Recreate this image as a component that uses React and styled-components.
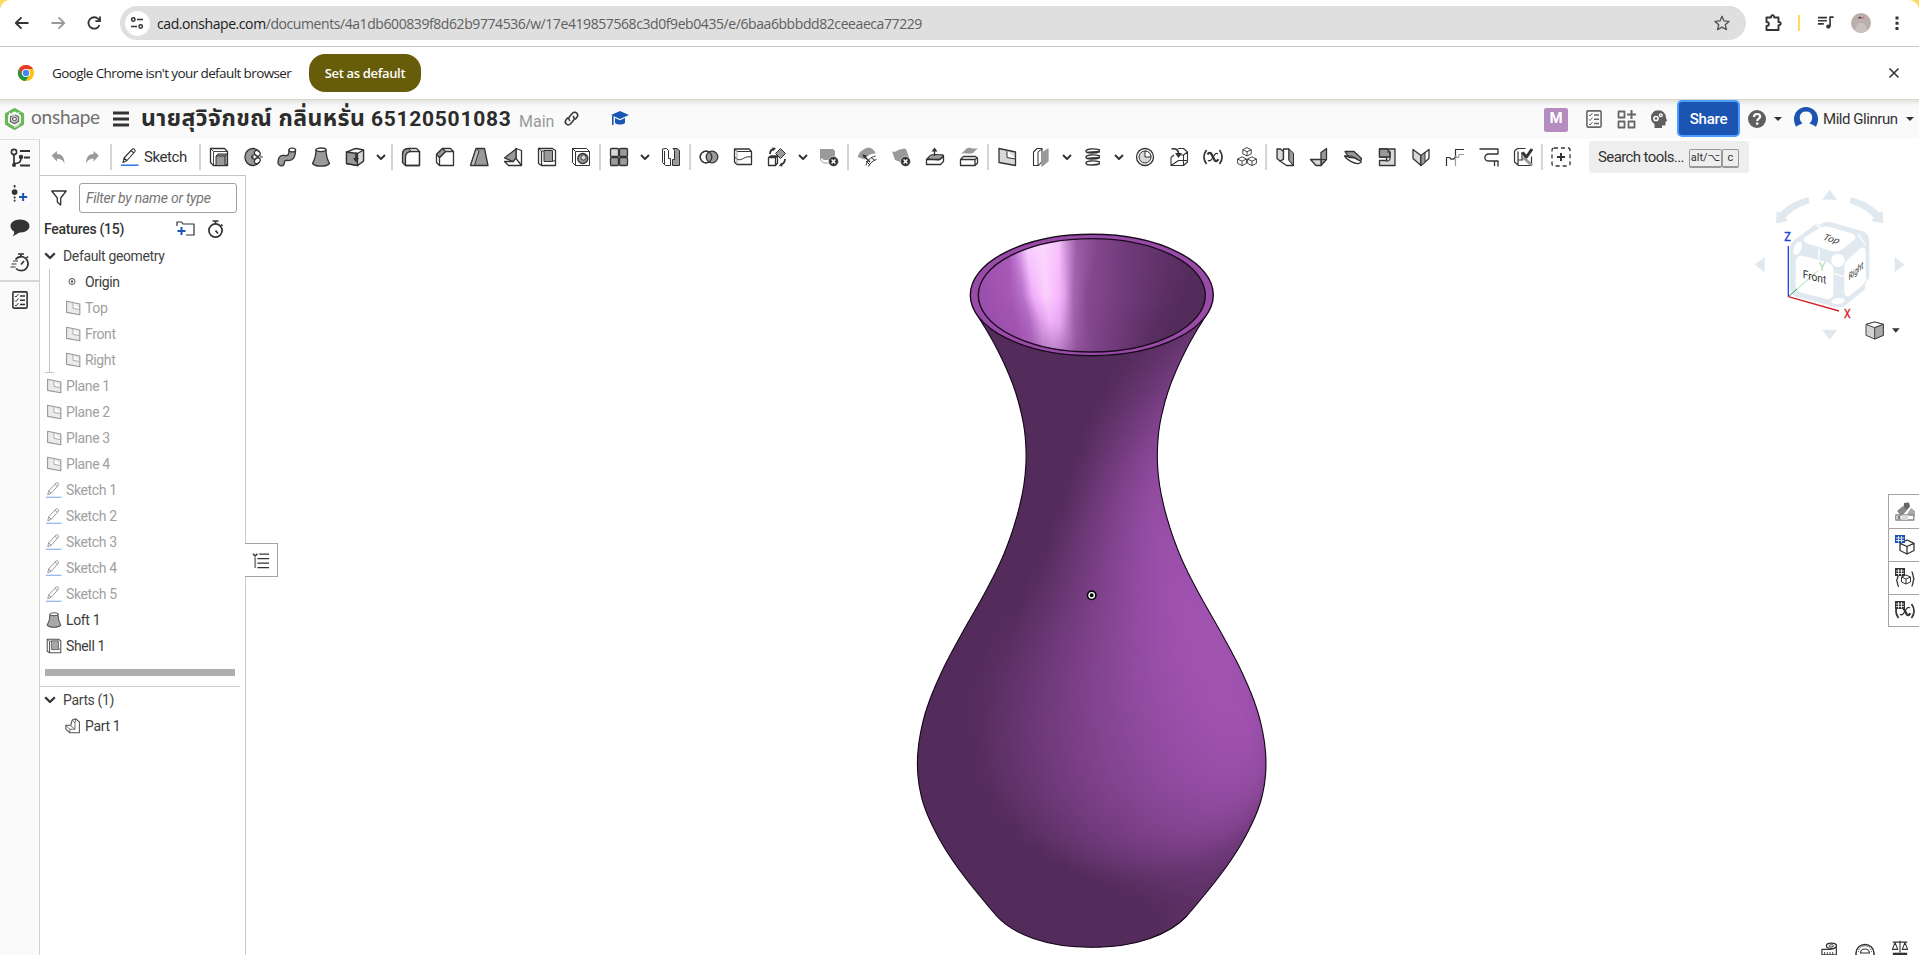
import React from 'react';
import styled, { createGlobalStyle } from 'styled-components';

const Global = createGlobalStyle`
  *, *::before, *::after { box-sizing: border-box; }
  html, body { margin: 0; padding: 0; overflow: hidden; background: #fff; }
  body { font-family: Roboto, "Liberation Sans", sans-serif; color: #333; }
  button, input { font: inherit; color: inherit; margin: 0; }
`;

const Page = styled.div`
  display: flex;
  flex-direction: column;
  width: 100vw;
  height: 100vh;
  background: #fff;
`;

/* ---------- browser chrome ---------- */
const TabStrip = styled.div`
  background: #ffd95c;
`;
const BrowserBar = styled.div`
  display: flex;
  align-items: center;
  height: 47px;
  background: #fff;
  border-radius: 10px 10px 0 0;
  border-bottom: 1px solid #c9c9c9;
  padding-left: 12px;
`;
const NavButtons = styled.div`
  display: flex;
  gap: 16px;
  width: 108px;
`;
const Omnibox = styled.div`
  display: flex;
  align-items: center;
  width: 1626px;
  height: 34px;
  border-radius: 17px;
  background: #dfdfdf;
  padding: 0 15px 0 4.5px;
`;
const SiteInfo = styled.div`
  display: grid;
  place-items: center;
  width: 25px;
  height: 25px;
  border-radius: 50%;
  background: #fff;
  margin-right: 7.5px;
`;
const Url = styled.div`
  flex: 1;
  font: 14px "Open Sans", "Noto Sans", sans-serif;
  letter-spacing: -0.42px;
  color: #606060;
  white-space: nowrap;
  b { font-weight: 400; color: #202020; }
`;
const BrowserActions = styled.div`
  display: flex;
  align-items: center;
  padding-left: 17px;
`;
const YellowBar = styled.span`
  width: 2px;
  height: 16px;
  background: #ffd95c;
  margin: 0 17px 0 15px;
`;
const Profile = styled.span`
  width: 20px;
  height: 20px;
  border-radius: 50%;
  overflow: hidden;
  margin: 0 16px 0 16px;
  svg { display: block; }
`;
const InfoBar = styled.div`
  display: flex;
  align-items: center;
  height: 53px;
  padding: 0 16px 0 17px;
  border-bottom: 1px solid #d7d9c9;
  font: 14px "Open Sans", "Noto Sans", sans-serif;
  color: #1f1f1f;
`;
const InfoText = styled.span`
  width: 257px;
  margin-left: 17px;
  font-size: 13.5px;
  letter-spacing: -0.6px;
  white-space: nowrap;
`;
const DefaultButton = styled.button`
  width: 112px;
  height: 38px;
  border: 0;
  border-radius: 16px;
  background: #675c0a;
  color: #fff;
  font-weight: 600;
  font-size: 13px;
  letter-spacing: -0.35px;
  padding: 0;
  white-space: nowrap;
`;
const CloseSlot = styled.span`
  margin-left: auto;
  display: flex;
`;

/* ---------- document header ---------- */
const Header = styled.header`
  display: flex;
  align-items: center;
  height: 39px;
  background: linear-gradient(#e2e2e2, #f6f6f6 5px, #fafafa 9px);
  padding: 0 5px 2px 4px;
`;
const Brand = styled.span`
  width: 82px;
  margin: -4px 0 0 6px;
  font: 19px Lato, sans-serif;
  letter-spacing: -0.2px;
  color: #707070;
`;
const Title = styled.h1`
  display: flex;
  align-items: baseline;
  margin: 0 0 0 12px;
  padding-top: 1px;
  font: 700 20px/30px Roboto, "Noto Sans Thai", sans-serif;
  white-space: nowrap;
  color: #2c2c2c;
`;
const ThaiName = styled.span`
  width: 230px;
  font-size: 23px;
  letter-spacing: 0.45px;
`;
const Digits = styled.span`
  width: 148px;
  font-size: 21px;
  letter-spacing: 0.72px;
`;
const Branch = styled.span`
  width: 45px;
  font-size: 16px;
  padding-top: 5px;
  color: #999;
`;
const CapSlot = styled.span`
  display: flex;
  margin-left: 32px;
`;
const HeaderRight = styled.div`
  display: flex;
  align-items: center;
  margin-left: auto;
  height: 37px;
`;
const Badge = styled.span`
  width: 24px;
  height: 24px;
  border-radius: 2px;
  background: #b58cc0;
  color: #fff;
  font: 700 15px/21px Roboto, sans-serif;
  text-align: center;
  margin: 3px 18px 0 0;
`;
const HeadIcon = styled.span`
  display: flex;
  margin: 1px ${(p) => p.$gap}px 0 0;
`;
const ShareButton = styled.button`
  width: 63px;
  height: 37px;
  border: 2px solid #4a9cff;
  border-radius: 5px;
  background: #1b55b1;
  color: #fff;
  font-weight: 500;
  font-size: 15px;
  letter-spacing: -0.2px;
  padding: 0;
  margin-right: 8px;
`;
const UserName = styled.span`
  width: 83px;
  font-size: 15px;
  letter-spacing: -0.45px;
  white-space: nowrap;
`;

/* ---------- app frame ---------- */
const Frame = styled.div`
  display: flex;
  flex: 1;
  min-height: 0;
`;
const Rail = styled.nav`
  display: flex;
  flex-direction: column;
  width: 40px;
  background: #fafafa;
  border-right: 1px solid #d0d0d0;
  border-top: 1px solid #e0e0e0;
`;
const RailItem = styled.span`
  display: grid;
  place-items: center;
  height: 35px;
`;
const RailSplit = styled.hr`
  width: 100%;
  height: 2px;
  border: 0;
  margin: 0;
  background: #d6d6d6;
`;
const Work = styled.div`
  display: flex;
  flex-direction: column;
  flex: 1;
  min-width: 0;
`;
const ToolBar = styled.div`
  display: flex;
  align-items: center;
  height: 36px;
`;
const Tool = styled.span`
  display: grid;
  place-items: center;
  width: ${(p) => p.$w || 34}px;
  height: 36px;
`;
const Separator = styled.span`
  width: 2px;
  height: 26px;
  margin: 0 1px;
  background: #d4d4d4;
`;
const SketchButton = styled.span`
  display: flex;
  align-items: center;
  width: 85px;
  padding-left: 8px;
  gap: 5px;
  font-size: 15px;
  letter-spacing: -0.4px;
`;
const SearchTools = styled.span`
  display: flex;
  align-items: center;
  width: 160px;
  height: 32px;
  margin-left: 11px;
  padding-left: 9px;
  border-radius: 3px;
  background: #eee;
  font-size: 15px;
  letter-spacing: -0.6px;
`;
const SearchLabel = styled.span`
  width: 91px;
`;
const Key = styled.kbd`
  width: ${(p) => p.$w}px;
  height: 19px;
  margin-top: 3px;
  border: 1px solid #999;
  border-bottom-width: 2px;
  border-radius: 2px;
  font: 11px/16px Roboto, "DejaVu Sans", sans-serif;
  letter-spacing: 0;
  text-align: center;
  white-space: nowrap;
`;
const Body = styled.div`
  display: flex;
  flex: 1;
  min-height: 0;
`;

/* ---------- feature panel ---------- */
const Panel = styled.aside`
  width: 206px;
  border-top: 1px solid #c4c4c4;
  border-right: 1px solid #c9c9c9;
  font-size: 14px;
  letter-spacing: -0.36px;
`;
const FilterRow = styled.div`
  display: flex;
  align-items: center;
  padding: 7px 0 0 11px;
  height: 37px;
  gap: 12px;
`;
const FilterInput = styled.input`
  width: 158px;
  height: 30px;
  border: 1px solid #a0a0a0;
  border-radius: 3px;
  padding: 0 6px;
  font-style: italic;
  letter-spacing: -0.25px;
  outline: 0;
  &::placeholder { color: #757575; opacity: 1; }
`;
const FeatureHead = styled.div`
  display: flex;
  align-items: center;
  height: 30px;
  padding: 1px 0 0 4px;
  font-weight: 500;
  letter-spacing: -0.28px;
`;
const HeadLabel = styled.span`
  width: 132px;
`;
const FolderSlot = styled.span`
  display: flex;
  width: 31px;
`;
const Group = styled.div`
  display: flex;
  align-items: center;
  height: 26px;
  padding-left: 4px;
  gap: 7px;
  color: #444;
`;
const Nested = styled.div`
  position: relative;
  &::before {
    content: '';
    position: absolute;
    left: 9px; top: 0; width: 1px; height: 103px;
    background: #c4c4c4;
  }
  &::after {
    content: '';
    position: absolute;
    left: 5px; top: 103px; width: 9px; height: 1px;
    background: #c4c4c4;
  }
`;
const Row = styled.div`
  display: flex;
  align-items: center;
  height: 26px;
  gap: 4px;
  padding-left: ${(p) => (p.$nested ? 25 : 6)}px;
  color: ${(p) => (p.$dim ? '#a0a0a0' : '#3c3c3c')};
  svg { opacity: ${(p) => (p.$dim ? 0.5 : 0.85)}; }
`;
const Rollback = styled.div`
  width: 190px;
  height: 7px;
  margin: 10px 0 10px 5px;
  background: #aeaeae;
`;
const PartsBlock = styled.div`
  width: 200px;
  border-top: 1px solid #cfcfcf;
`;

/* ---------- canvas ---------- */
const Canvas = styled.main`
  position: relative;
  flex: 1;
  min-width: 0;
`;
const VaseSlot = styled.div`
  position: absolute;
  left: 658px;
  top: 50px;
  svg { display: block; }
`;
const ListToggle = styled.div`
  position: absolute;
  left: -1px;
  top: 368px;
  display: grid;
  place-items: center;
  width: 33px;
  height: 34px;
  background: #fff;
  border: 1px solid #a4a4a4;
  border-left: 0;
`;
const CubeSlot = styled.div`
  position: absolute;
  right: 12px;
  top: 13px;
  svg { display: block; }
`;
const SideTabs = styled.div`
  position: absolute;
  right: 0;
  top: 319px;
  width: 31px;
  border: 1px solid #a4a4a4;
  border-right: 0;
  background: #fff;
`;
const SideTab = styled.div`
  display: grid;
  place-items: center;
  height: 33px;
  padding-left: 1px;
  & + & { border-top: 1px solid #a4a4a4; }
  &:last-child { height: 32px; }
`;
const BottomTools = styled.div`
  position: absolute;
  right: 10px;
  bottom: -4px;
  display: flex;
  gap: 16px;
`;

/* ---------- icons ---------- */
const D = '#333';
const G = '#9a9a9a';
const L = '#d8d8d8';

const Svg = ({ w = 20, h = w, vb = '0 0 20 20', children, sw = 1.3 }) => (
  <svg width={w} height={h} viewBox={vb} fill="none" stroke={D} strokeWidth={sw} strokeLinejoin="round" overflow="visible">
    {children}
  </svg>
);

const Delete = () => (
  <>
    <circle cx="14.5" cy="14.5" r="5" fill={D} stroke="#fff" strokeWidth="0.6" />
    <path d="M12.6 12.6l3.8 3.8M16.4 12.6l-3.8 3.8" stroke="#fff" strokeWidth="1.4" />
  </>
);
const cube = (x, y, s) => (
  <path key={`${x}-${y}`} strokeWidth="0.9" d={`M${x} ${y - s}l${s} ${s / 2}v${s}l${-s} ${s / 2}l${-s} ${-s / 2}v${-s}zM${x - s} ${y - s / 2}l${s} ${s / 2}l${s} ${-s / 2}M${x} ${y}v${s}`} />
);

const glyphs = {
  undo: <path d="M2 7.500l6-5v3.300c5.500 0 8.500 3.500 8.500 11c-1.500-4-4-5.600-8.500-5.600v3.300z" transform="translate(1 1) scale(.98)" fill={G} stroke="none" />,
  redo: <path d="M18 7.500l-6-5v3.300c-5.500 0-8.500 3.500-8.500 11c1.500-4 4-5.600 8.500-5.600v3.300z" transform="translate(0 1) scale(.98)" fill={G} stroke="none" />,
  extrude: <><path d="M1.500 1.500h14l3 3v14h-14l-3-3z" fill="#fff" /><path d="M1.500 1.500l3 3h14M4.500 4.500v14" strokeWidth="0.9" /><path d="M7 9l2-2h9.500v9.500l-2 2h-9.500z" fill={G} strokeWidth="1" /><path d="M7 9h9v9.500M16 9l2.500-2" strokeWidth="1" /></>,
  revolve: <><path d="M16 4.500a8 8.500 0 1 0 0 11l-3.400-3.600a3.300 3.300 0 0 1-4-2a3.300 3.300 0 0 1 4-2z" fill={G} /><path d="M16 4.500a2.600 2 40 0 1-3.400 3.600a2.600 2 40 0 1 3.400-3.600zM16 15.500a2.600 2 -40 0 0-3.400-3.600a2.600 2 -40 0 0 3.400 3.600z" fill="#fff" /><path d="M8 10h12" strokeDasharray="3 1.500" strokeWidth="1" /></>,
  sweep: <><path d="M1 16c0-7 3-8 7-7.500c3 .3 4-.5 4-5.500l6.500 0c0 8-3 11-8 10.500c-3-.3-3 .5-3.500 4c-2 2.500-6 1-6-1.500z" fill={G} /><ellipse cx="15.300" cy="3" rx="3.300" ry="1.900" fill="#fff" /></>,
  loft: <><path d="M5 3c0 6-1 9-3.500 13.500c3 3.500 14 3.500 17 0c-2.500-4.500-3.500-7.500-3.500-13.500z" fill={G} /><ellipse cx="10" cy="2.800" rx="5" ry="1.800" fill="#fff" /></>,
  thicken: <><path d="M1.500 5c3 0 6-3.500 10-3.500l7 1.500v11l-6 4.500l-11-2z" fill="#fff" /><path d="M1.500 5l11 1.500v12l-11-2z" fill={G} /><path d="M12.500 6.500l6-3.500v11l-6 4.500z" fill={L} /><path d="M11 5.500v7" strokeWidth="1.800" /><path d="M8 11l3 4.500l3-4.500z" fill={D} stroke="none" /></>,
  fillet: <><path d="M1.500 15.500v-8c0-4 2-6 6-6l3 3c-4 0-6 2-6 6v8l-3-3z" fill={G} strokeWidth="1" /><path d="M4.500 18.500v-8c0-4 2-6 6-6h8v14z" fill="#fff" /><path d="M1.500 15.500v-8c0-4 2-6 6-6h8l3 3v14h-14z" /></>,
  chamfer: <><path d="M1.500 15.500v-8l6-6h8l3 3v14h-14zM10.500 4.500h8M4.500 18.500v-8l6-6" /><path d="M1.500 7.500l6-6l3 3l-6 6z" fill={G} /></>,
  draft: <><path d="M7 1.500h8.500l3.500 17h-17.500z" fill={G} /><path d="M7 1.500l3 2.500l-4.500 14.500h-4z" fill="#fff" fillOpacity=".35" strokeWidth="1" /></>,
  rib: <><path d="M13 1.500l5.500 2v15h-13l-4-4h9z" fill="#fff" /><path d="M13 1.500v10l5.500 7" /><path d="M1.500 11l11.500-9v9l-3 3.500z" fill={G} /></>,
  shell: <><path d="M1.500 1.500h14l3 2v15h-14l-3-2z" fill="#fff" /><path d="M4.500 4v14.500" /><path d="M7 3.500h8.500v11h-8.500z" fill={G} strokeWidth="1" /><path d="M15.500 14.500l2.500-1M1.500 1.500l3 2.500h2.500" strokeWidth="1" /></>,
  hole: <><path d="M1.500 1.500h14l3 3v14h-14l-3-3zM1.500 1.500l3 3h14M4.500 4.500v14" strokeWidth="1" /><circle cx="11.800" cy="11.500" r="5" fill={G} /><circle cx="12.500" cy="10.500" r="2.600" fill={L} strokeWidth=".9" /></>,
  pattern: <><rect x="1.500" y="1.500" width="8" height="8" rx="1" fill={L} /><rect x="10.500" y="1.500" width="8" height="8" rx="1" fill={G} /><rect x="1.500" y="10.500" width="8" height="8" rx="1" fill={G} /><rect x="10.500" y="10.500" width="8" height="8" rx="1" fill={G} /></>,
  mirror: <><path d="M1.500 2l4-.5l2 2v8h2v7h-5l-3-3zM3.500 4v14" strokeWidth="1" /><path d="M12 1.500h4l2.500 2v15h-7v-6h2v-9z" fill={G} strokeWidth="1" /></>,
  boolean: <><circle cx="7" cy="10" r="5.800" fill="#fff" /><circle cx="13" cy="10" r="5.800" fill={G} /><circle cx="7" cy="10" r="5.800" /></>,
  split: <><path d="M1.500 2h14.500l2.500 2.500v13h-14.500l-2.500-2.500z" /><path d="M1.500 2l2.500 2.500h14.500M1.500 10l3 2.500c5 1.500 7-4 14-2.500" strokeWidth="1" /><path d="M4 4.500v13" stroke={G} strokeWidth="1" /></>,
  transform: <><path d="M1.500 10.500l2-1.500h7v7l-2 2.500h-7zM1.500 10.500h7v8M8.500 10.500l2-1.500" /><path d="M13.500 1.500l5 5l-5 5l-5-5z" fill={G} strokeWidth="1" /><path d="M3 7c0-3 1-4.500 4-5M18 12c0 3-1 4.500-4 5.500" strokeWidth="1.800" /><path d="M5 .500l4 .500l-2.500 3zM15.500 19.500l-3.500-.500l2.500-3.500z" fill={D} stroke="none" /></>,
  deletePart: <><path d="M2 2h12l2 2v9h-11l-3-2z" fill={G} stroke="none" /><path d="M1.500 2v11l3 3h5" strokeWidth="1" stroke={G} /><Delete /></>,
  modFillet: <><path d="M.500 10c2-6 7-9 12-9.500c3 1 5 3 6.500 6c-5 0-9 2-11 6z" fill={G} stroke="none" /><path d="M9 18.500c1-5 4-8 9.500-9.500M11.500 19.500c1.500-3 4-6 8-7M9 14l4 4M14 10.500l4 3" strokeWidth="1" /><path d="M6 8l7 7" strokeWidth="1.500" /><path d="M5.500 7.500l4.500 1l-3 3z" fill={D} stroke="none" /></>,
  deleteFace: <><path d="M1 4c3 3 7-4 14-2l3 8l-6 6l-8-3z" fill={G} stroke="none" /><Delete /></>,
  moveFace: <><path d="M1.500 12.500l4-4h13v6l-3 3h-14z" /><path d="M3 12c1-5 6-5 15-4c-1 3-3 4-4.500 5z" fill={G} strokeWidth="1" /><path d="M1.500 12.500h13.500l3.500-3M9.500 9v-6" /><path d="M6.500 4.500l3-4l3 4z" fill={D} stroke="none" /></>,
  replaceFace: <><path d="M2 7l5-5c4-3 6 1 12-1l-5 5c-5 2-8-1-12 1z" fill={G} stroke="none" /><path d="M1.500 12.500l3-3h12l2 1.500v5l-2.500 2.500h-14.500zM1.500 12.500h14.500l2.500-2M16 12.500v6" /></>,
  plane: <><path d="M2 1.500l16.500 3.500v13.500l-16.500-3z" fill={L} /><path d="M10 3.300v7.200l8.500 1.500" fill="#fff" strokeWidth="1" /></>,
  frame: <><path d="M2.500 5l3.500-3.500h5v13l-3.500 4h-5z" strokeWidth="1.100" /><path d="M7 18v-13l4-3" strokeWidth="1" /><path d="M11 6l6-4v12l-6 5z" fill={G} stroke={G} /></>,
  helix: <path d="M17 3c-7-2-14-1-14 1.200c0 2.500 10 2.300 14 .3M17 9c-7-2-14-1-14 1.200c0 2.500 10 2.300 14 .3M17 15c-7-2-14-1-14 1.200c0 2.500 10 2.300 14 .3M4 5.500c2-1 8 0 13-1M4 11.500c2-1 8 0 13-1" strokeWidth="1.400" />,
  clock: <><circle cx="10" cy="10" r="8.500" /><circle cx="10" cy="10" r="6" fill={L} strokeWidth="1" /><path d="M10 4v6h6a6 6 0 0 0-6-6z" fill="#fff" strokeWidth="1" /></>,
  derived: <><path d="M2 10.500v8h12.500v-10.500h-3M14.500 18.500l4-3.500v-10l-4-3.500h-5.500M14.500 8l4-3M2 10.500l3-2.500M2 18.500l7.500-5h9" strokeWidth="1.100" /><path d="M2.500 2c5-1 7 1 7.500 6" strokeWidth="1.700" /><path d="M6 6l7 0l-3.500 5z" fill={D} stroke="none" /></>,
  cubes: <>{[cube(10, 4.8, 4.2), cube(5, 14.2, 4.4), cube(15, 14.2, 4.4)]}</>,
  sheetA: <><path d="M2 2h3.500l3 2.500v8l-3.500 1.500l-3-2.500z" fill={L} /><path d="M8.500 2h5.500v10.500l4.500 6h-7l-6.500-4.500l3.500-1.500z" fill="#fff" /><path d="M14 2l4.500 4v12.500l-4.500-5z" fill={G} strokeWidth="1" /></>,
  sheetB: <><path d="M12 5.500l5.500-4v11l-5.500 6z" fill={G} /><path d="M1.500 12.500h10.500v6h-5z" fill={L} /><path d="M12 12.500l5.500 0" strokeWidth="1" /></>,
  sheetC: <><path d="M1.500 9c2 4 10 8 14 7.500c4-1 3-3 .500-5z" fill="#fff" /><path d="M2 4.500h9l7.500 7c0 2-2 2.500-3 1.500l-4-2.500h-5.500z" fill={G} /><path d="M1.500 9h7l6 4" strokeWidth="1" /></>,
  sheetD: <><path d="M2.500 2h15.500v16.500h-15.500v-5h7v-3.500h-7z" fill={L} /><path d="M2.500 2h7.500l3 3v5h-3.500h-7z" fill={G} /><path d="M13 5v7c0 2-4 3-4 1M13 5h-3" strokeWidth="1.100" /></>,
  sheetE: <><path d="M2 2.500l8 6v10l-8-7z" fill={L} /><path d="M18 2.500l-8 6v10l8-7z" fill="#fff" /><path d="M10 8.500l4-3v10l-4 3z" fill={G} strokeWidth="1" /></>,
  sheetF: <><path d="M19 2h-8.500v6.500c0 4-5.500 4 -5.500 1.500h-3.500v8.500" strokeWidth="1.200" transform="translate(0 .5)" /><path d="M10.500 8.500c1 3 3.500 3 3.500-1h5M10.500 12v7" stroke={G} strokeWidth="1.200" /></>,
  sheetG: <path d="M.500 2h18.500v5h-9c-5.500 0-5.500 7 0 7h9v5.500M15.500 14v5" strokeWidth="1.300" />,
  sheetH: <><path d="M1.500 4l3-2.500h8M1.500 4v11l4 3.500h13v-9M5 4.500v14M9 5v8M5 13h5" strokeWidth="1.200" /><path d="M10 10l9 8.500" strokeWidth="3" stroke={G} /><path d="M9.500 5.500l4 4.500l5.500-8" strokeWidth="3" /></>,
  addBox: <><rect x="1" y="1" width="18" height="18" rx="2" strokeDasharray="4 3" /><path d="M10 6v8M6 10h8" strokeWidth="2" /></>,
};

const Chevron = ({ w = 10 }) => (
  <Svg w={w} h={w * 0.6} vb="0 0 10 6" sw={1.9}><path d="M1 1l4 4l4-4" /></Svg>
);
const Caret = ({ w = 8 }) => (
  <Svg w={w} h={w / 2} vb="0 0 8 4"><path d="M0 0h8l-4 4z" fill={D} stroke="none" /></Svg>
);
const Pencil = ({ w = 18 }) => (
  <Svg w={w} vb="0 0 18 18" sw={1.1}>
    <path d="M2 14.500l1-4.500l8.500-9c1-.8 3.500 1 2.500 2.500l-8 9zM3 10l2.800 2.500M10 2.500l3 2.500" />
    <path d="M0 17.200h17.500" stroke="#1b6fe0" strokeWidth="1.400" />
  </Svg>
);
const Checklist = ({ c = D }) => (
  <Svg w={16} h={18} vb="0 0 16 18">
    <rect x=".9" y=".9" width="14.200" height="16.200" rx="1" stroke={c} strokeWidth="1.600" />
    <path d="M3 5l1 1l2.500-3M3 9.500l1 1l2.500-3M3 14l1 1l2.500-3" stroke={c} strokeWidth="1" />
    <path d="M8 5h5M8 9.300h5M8 13.500h5" stroke={c} strokeWidth="1.600" />
  </Svg>
);
const VarX = () => (
  <>
    <path d="M3.500 3c-3.300 4.500-3.300 9.500 0 14M16.500 3c3.300 4.500 3.300 9.500 0 14" strokeWidth="1.700" />
    <path d="M4.500 7.500c1.500-2.500 3.500-2 4.500.5l2.500 5c.8 1.700 2.500 1.500 3.800-.8" strokeWidth="2.300" />
    <path d="M14.800 7c-1.500-1.500-3 0-4.500 2.800s-3.500 5-5.300 3.400" strokeWidth="1.300" />
  </>
);

const toolGroups = [
  ['extrude', 'revolve', 'sweep', 'loft', 'thicken', 'v'],
  ['fillet', 'chamfer', 'draft', 'rib', 'shell', 'hole'],
  ['pattern', 'v', 'mirror'],
  ['boolean', 'split', 'transform', 'v', 'deletePart'],
  ['modFillet', 'deleteFace', 'moveFace', 'replaceFace'],
  ['plane', 'frame', 'v', 'helix', 'v', 'clock', 'derived', 'varx', 'cubes'],
  ['sheetA', 'sheetB', 'sheetC', 'sheetD', 'sheetE', 'sheetF', 'sheetG', 'sheetH'],
  ['addBox'],
];

/* ---------- vase rendering ---------- */
const CX = 1091.7;
const profile = [
  [300, 124], [313.3, 115.7], [336, 101.7], [361.7, 88.4], [391.7, 76.2], [423.3, 68.2], [440, 66.2], [457, 65.5], [473, 66.4], [490, 68.6],
  [521.7, 76.3], [556.7, 88.9], [590, 105.3], [635, 130.7], [671.7, 150], [708.3, 165], [738.3, 172.2],
  [763.3, 174.4], [788.3, 172.2], [811.7, 165.6], [843.3, 150], [872.3, 130.7], [908.3, 101.7], [930, 83],
];
const Y0 = 300;
const Y1 = 930;
function sampleProfile() {
  const out = [];
  for (let y = Y0; y <= Y1; y += 1) {
    let i = 0;
    while (i < profile.length - 2 && profile[i + 1][0] < y) i += 1;
    const [ya, a] = profile[i];
    const [yb, b] = profile[i + 1];
    const p = profile[i - 1] || profile[i];
    const n = profile[i + 2] || profile[i + 1];
    const h = yb - ya;
    const ma = ((b - p[1]) / (yb - p[0])) * h;
    const mb = ((n[1] - a) / (n[0] - ya)) * h;
    const t = (y - ya) / h;
    const t2 = t * t;
    const t3 = t2 * t;
    out.push((2 * t3 - 3 * t2 + 1) * a + (t3 - 2 * t2 + t) * ma + (-2 * t3 + 3 * t2) * b + (t3 - t2) * mb);
  }
  return out;
}
function smooth(arr, k) {
  return arr.map((_, i) => {
    const m = Math.min(k, i, arr.length - 1 - i);
    let s = 0;
    for (let j = i - m; j <= i + m; j += 1) s += arr[j];
    return s / (2 * m + 1);
  });
}
const widths = sampleProfile();
const soft = smooth(smooth(widths, 7), 7);
const slopes = smooth(smooth(soft.map((v, i) => {
  const a = Math.max(0, i - 2);
  const b = Math.min(soft.length - 1, i + 2);
  return (soft[b] - soft[a]) / (b - a);
}), 9), 9);

const DARK = [84, 44, 92];
const LIGHT = [162, 83, 178];
const LAMP = [0.62, 0.2, 0.76];
function shade(s, drdz) {
  const c = Math.sqrt(Math.max(0, 1 - s * s));
  const len = Math.sqrt(1 + drdz * drdz);
  const v = (LAMP[0] * s + LAMP[1] * c - LAMP[2] * drdz) / len + 0.03;
  const t = Math.max(0, Math.min(1, v / 0.95));
  return `rgb(${DARK.map((d, i) => Math.round(d + (LIGHT[i] - d) * t)).join(',')})`;
}
const STOPS = [-1, -0.9, -0.75, -0.6, -0.45, -0.3, -0.15, 0, 0.15, 0.3, 0.45, 0.6, 0.75, 0.87, 0.95, 1];
const discs = [];
for (let i = 12; i < widths.length - 10; i += 2) {
  const y = Y0 + i;
  const w = soft[i];
  const k = slopes[i];
  const c = y + (w * k) / 4;
  const r = w * Math.sqrt(1 + (k * k) / 4);
  discs.push({ c, r, drdz: -k * 0.866 });
}
discs.sort((a, b) => b.c - a.c);

const outline = (() => {
  const left = [];
  for (let y = 312; y <= 916; y += 2) left.push([CX - soft[y - Y0], y]);
  const right = left.map(([x, y]) => [2 * CX - x, y]).reverse();
  const f = (p) => p.map(([x, y]) => `${x.toFixed(1)} ${y}`).join('L');
  return { left: f(left), right: f(right) };
})();
const bodyPath = `M${outline.left}C1013 934 1046 947.300 ${CX} 947.300C1137 947.300 1170 934 ${outline.right}`;

const hex = (h) => [1, 3, 5].map((i) => parseInt(h.slice(i, i + 2), 16));
const innerKeys = [
  [240, [[978, '#a055b0'], [1008, '#a659b6'], [1016, '#d28ae2'], [1026, '#fad0fd'], [1043, '#fbd7fd'], [1059, '#f7c0fd'], [1066, '#cb92d6'], [1077, '#9a5ca5'], [1100, '#7f4488'], [1135, '#6c3876'], [1172, '#5f3168'], [1200, '#552c5d']]],
  [295, [[978, '#994daa'], [1010, '#a558b5'], [1023, '#b872c9'], [1033, '#f0aefb'], [1046, '#fbd0fd'], [1059, '#f8b5fd'], [1065, '#e0a2ea'], [1073, '#a868b5'], [1087, '#86498f'], [1130, '#6e3978'], [1165, '#5b2f63'], [1185, '#542c5c']]],
  [322, [[978, '#994daa'], [1015, '#a053b0'], [1030, '#b068c0'], [1041, '#dc9ae8'], [1050, '#f0b0fa'], [1059, '#e9a8f4'], [1065, '#cc90d8'], [1074, '#a060ac'], [1088, '#84478e'], [1125, '#6c3876'], [1155, '#592e61'], [1175, '#542c5c']]],
  [352, [[978, '#994daa'], [1020, '#9b50aa'], [1032, '#a45bb2'], [1044, '#b478c2'], [1054, '#b97fc6'], [1062, '#b074bd'], [1070, '#9d60a9'], [1079, '#8c4e97'], [1095, '#7d4388'], [1120, '#6c3876'], [1142, '#5c3064'], [1155, '#542c5c']]],
];
const innerRows = [];
for (let y = 237; y < 353; y += 1) {
  let i = 0;
  while (i < innerKeys.length - 2 && innerKeys[i + 1][0] < y) i += 1;
  const [ya, a] = innerKeys[i];
  const [yb, b] = innerKeys[i + 1];
  const t = Math.max(0, Math.min(1, (y - ya) / (yb - ya)));
  innerRows.push({
    y,
    stops: a.map(([x, col], j) => {
      const ca = hex(col);
      const cb = hex(b[j][1]);
      return [(x + (b[j][0] - x) * t - 970) / 244, `rgb(${ca.map((v, q) => Math.round(v + (cb[q] - v) * t)).join(',')})`];
    }),
  });
}

const Vase = () => (
  <svg width="376" height="730" viewBox="904 225 376 730">
    <defs>
      <clipPath id="body"><path d={`${bodyPath}Z`} /></clipPath>
      <clipPath id="mouth"><ellipse cx="1091.800" cy="295.300" rx="113.500" ry="56.700" /></clipPath>
      {discs.map((d, i) => (
        <linearGradient key={i} id={`d${i}`}>
          {STOPS.map((s) => <stop key={s} offset={(s + 1) / 2} stopColor={shade(s, d.drdz)} />)}
        </linearGradient>
      ))}
      {innerRows.map((r) => (
        <linearGradient key={r.y} id={`m${r.y}`}>
          {r.stops.map(([o, c], j) => <stop key={j} offset={o} stopColor={c} />)}
        </linearGradient>
      ))}
    </defs>
    <g clipPath="url(#body)">
      <rect x="904" y="225" width="376" height="730" fill="rgb(84,44,92)" />
      {discs.map((d, i) => <ellipse key={i} cx={CX} cy={d.c} rx={d.r} ry={d.r / 2} fill={`url(#d${i})`} />)}
    </g>
    <path d={bodyPath} fill="none" stroke="#15081a" strokeWidth="1.100" />
    <ellipse cx="1091.800" cy="295" rx="121.500" ry="60.700" fill="#994ba8" stroke="#1a0a1e" strokeWidth="1.400" />
    <g clipPath="url(#mouth)">
      {innerRows.map((r) => <rect key={r.y} x="970" y={r.y} width="244" height="1.500" fill={`url(#m${r.y})`} />)}
    </g>
    <ellipse cx="1091.800" cy="295.300" rx="113.500" ry="56.700" fill="none" stroke="#1a0a1e" strokeWidth="1.400" />
    <circle cx="1091.700" cy="595.300" r="5" fill="#000" />
    <circle cx="1091.700" cy="595.300" r="2.700" fill="#000" stroke="#fff" strokeWidth="1.400" />
  </svg>
);

const ViewCube = () => (
  <svg width="154" height="154" viewBox="850 160 462 462" fontFamily="Roboto, sans-serif">
    <g fill="#e1e9f0">
      <path d="M1057 195l23-30l23 30zM1057 585h46l-23 30zM885 367v46l-30-23zM1275 367v46l30-23z" />
      <path d="M1017 188l3 18c-32 10-55 24-72 43l6 10l-35 7l2-37l10 5c22-22 50-38 86-46z" />
      <path d="M1143 188l-3 18c32 10 55 24 72 43l-6 10l35 7l-2-37l-10 5c-22-22-50-38-86-46z" />
      <path d="M1040 267l-65 48c-10 8-15 18-15 32v110c0 15 8 25 22 30l115 30c10 3 20 2 28-3l58-47c3-3 4-8 2-18l6-8c5-3 8-10 8-20v-95c0-20-5-30-20-36l-95-27c-12-2-25-1-32 8z" />
    </g>
    <g fill="#fff">
      <path d="M1010 305l40-25c10-5 20-5 30-3l60 17c20 6 22 14 8 26l-28 22c-10 8-22 10-35 7l-65-20c-20-6-24-14-10-24z" />
      <path d="M1000 364l70 18c15 4 21 12 21 26v65c0 15-8 22-20 20l-72-18c-14-4-21-12-21-26v-65c0-15 8-23 22-20z" />
      <path d="M1140 370l30-27c10-8 18-5 18 8v78c0 10-3 17-10 23l-34 28c-12 9-20 5-20-10v-70c0-12 5-22 16-30z" />
      <circle cx="1105" cy="377" r="20" />
      <ellipse cx="984" cy="341" rx="11" ry="21" transform="rotate(22 984 341)" />
      <ellipse cx="1105" cy="499" rx="20" ry="9" transform="rotate(-8 1105 499)" />
    </g>
    <path d="M1048 342v32M1093 417l32 9M1165 298l22 32M1038 270l14 8M1185 430l12 16" stroke="#fff" strokeWidth="4" />
    <path d="M956 486l26-23" stroke="#3a9a3a" strokeWidth="3" />
    <path d="M982 463l62-54" stroke="#a9dca9" strokeWidth="3" />
    <path d="M956 486v-152" stroke="#2444d8" strokeWidth="4" />
    <path d="M956 486l152 43" stroke="#d42027" strokeWidth="4" />
    <text x="944" y="320" fontSize="37" textLength="20" lengthAdjust="spacingAndGlyphs" fill="#2444d8" stroke="#2444d8">Z</text>
    <text x="1047" y="409" fontSize="37" textLength="20" lengthAdjust="spacingAndGlyphs" fill="#a9dca9">Y</text>
    <text x="1123" y="551" fontSize="37" textLength="20" lengthAdjust="spacingAndGlyphs" fill="#d42027" stroke="#d42027">X</text>
    <g fill="#333">
      <text transform="matrix(.9 .24 0 1 999 429)" fontSize="34">Front</text>
      <text transform="matrix(.92 .26 -.55 .72 1056 314)" fontSize="31">Top</text>
      <text transform="matrix(.62 -.54 0 1 1137 438)" fontSize="31">Right</text>
    </g>
    <g stroke="#444" strokeWidth="3" strokeLinejoin="round">
      <path d="M1189 569l26-7l26 7v33l-26 11l-26-11z" fill="#d2d2d2" />
      <path d="M1189 569l26 10l26-10l-26-7z" fill="#fff" />
      <path d="M1215 579v34l26-11v-33z" fill="#aaa" />
    </g>
    <path d="M1267 581h23l-11.500 13z" fill="#333" />
  </svg>
);

const PlaneIcon = () => (
  <Svg w={16} vb="0 0 20 20" sw={1.4}>{glyphs.plane}</Svg>
);

const TableGrid = ({ c }) => (
  <><rect x="0" y="0" width="10" height="8" fill={c} stroke="none" /><path d="M1 3h8M1 5.500h8M3.500 1v6.500M6.500 1v6.500" stroke="#fff" strokeWidth=".8" /></>
);

export default function App() {
  return (
    <Page>
      <Global />
      <TabStrip>
        <BrowserBar>
          <NavButtons>
            <Svg sw={1.8}><path d="M16.500 10h-12.500M9.500 4.300l-5.700 5.700l5.700 5.700" /></Svg>
            <Svg sw={1.8}><path d="M3.500 10h12.500M10.500 4.300l5.700 5.700l-5.700 5.700" stroke="#9a9a9a" /></Svg>
            <Svg sw={1.8}><path d="M15.500 12a5.700 5.700 0 1 1-1.200-6l1.700 1.700M16 3.500v4.700h-4.700" /></Svg>
          </NavButtons>
          <Omnibox>
            <SiteInfo>
              <Svg w={14} vb="0 0 14 14" sw={1.5}><circle cx="3.300" cy="3.500" r="1.700" /><path d="M7 3.500h6M1 10.500h6" /><circle cx="10.700" cy="10.500" r="1.700" /></Svg>
            </SiteInfo>
            <Url><b>cad.onshape.com</b>/documents/4a1db600839f8d62b9774536/w/17e419857568c3d0f9eb0435/e/6baa6bbbdd82ceeaeca77229</Url>
            <Svg w={18} sw={1.5}><path d="M10 2.500l2.200 5.200l5.600.500l-4.200 3.700l1.300 5.500l-4.900-2.900l-4.900 2.900l1.300-5.500l-4.200-3.700l5.600-.500z" stroke="#555" /></Svg>
          </Omnibox>
          <BrowserActions>
            <Svg w={20} sw={1.9}><path d="M3.500 4.500h4.500c-.3-3 3.500-3 3.200 0h4.300v4.500c3-.3 3 3.500 0 3.200v4.800h-12v-4c3.200 0 3.200-4 0-4z" /></Svg>
            <YellowBar />
            <Svg w={18} sw={1.8}><path d="M1 4h10M1 7.500h10M1 11h6.500M14.500 14v-10.500h4" /><circle cx="12.600" cy="14" r="2.400" fill={D} stroke="none" /></Svg>
            <Profile>
              <Svg><rect width="20" height="20" fill="#b9b0ac" stroke="none" /><path d="M4 20c0-8 3-10 6-10s6 3 7 10z" fill="#c9c1be" stroke="none" /><circle cx="9" cy="6" r="1.900" fill="#cdb4aa" stroke="none" /><path d="M7 5.500c.5-2.500 3.500-2.500 4 0z" fill="#4d4040" stroke="none" /><circle cx="12.500" cy="4.700" r="1" fill="#e0608a" stroke="none" /></Svg>
            </Profile>
            <Svg><path d="M10 3.500v3M10 8.700v3M10 14v3" strokeWidth="3" /></Svg>
          </BrowserActions>
        </BrowserBar>
      </TabStrip>
      <InfoBar>
        <Svg w={18}>
          <g stroke="none">
            <circle cx="10" cy="10" r="9" fill="#fbc116" />
            <path d="M2.200 5.500a9 9 0 0 1 15.600 0h-7.800l-4 6.800z" fill="#e33b2e" />
            <path d="M2.200 5.500a9 9 0 0 0 7 13.500l4.700-6.700h-8z" fill="#229342" />
            <circle cx="10" cy="10" r="4.500" fill="#fff" />
            <circle cx="10" cy="10" r="3.500" fill="#4285f4" />
          </g>
        </Svg>
        <InfoText>Google Chrome isn't your default browser</InfoText>
        <DefaultButton>Set as default</DefaultButton>
        <CloseSlot><Svg w={18} sw={1.7}><path d="M5 5l10 10M15 5l-10 10" /></Svg></CloseSlot>
      </InfoBar>
      <Header>
        <Svg w={21} h={22} vb="0 0 21 22">
          <path d="M10.500 1.500l8 4.800v9.400l-8 4.800l-8-4.800v-9.400z" stroke="#67b756" strokeWidth="3.200" />
          <path d="M10.500 6.500l4 2.300v4.500l-4 2.300l-4-2.300v-4.500z" stroke="#666" strokeWidth="1.400" />
          <path d="M15.500 4.500l-8 3M5.500 4.500l0 8M10.500 19.500l5-3" stroke="#fafafa" strokeWidth="1" />
          <circle cx="10.500" cy="11" r="1.900" stroke="#666" strokeWidth="1.300" />
        </Svg>
        <Brand>onshape</Brand>
        <Svg w={16} vb="0 0 16 16" sw={3}><path d="M0 2h16M0 8h16M0 14h16" /></Svg>
        <Title>
          <ThaiName>นายสุวิจักขณ์ กลิ่นหรั่น</ThaiName>
          <Digits>65120501083</Digits>
        </Title>
        <Branch>Main</Branch>
        <Svg w={15} vb="0 0 16 16" sw={1.6}><path d="M6.500 10.500c-2-1.500-1.500-3.500-.500-4.700l3-3.500c1.500-1.500 3.500-1.200 4.700 0c1.200 1.200 1.200 3 0 4.500l-2 2.200M9.500 5.500c2 1.500 1.500 3.500.5 4.700l-3 3.500c-1.500 1.500-3.500 1.200-4.700 0c-1.200-1.200-1.200-3 0-4.500l2-2.200" /></Svg>
        <CapSlot>
          <Svg w={18} h={16} vb="0 0 18 16"><path d="M9 0l9 4l-9 4l-9-4z" fill="#1b55b1" stroke="none" /><path d="M4 7l5 2.300l5-2.300v5c-3 2-7 2-10 0z" fill="#1b55b1" stroke="none" /><path d="M1.800 5v9" stroke="#1b55b1" strokeWidth="1.600" /></Svg>
        </CapSlot>
        <HeaderRight>
          <Badge>M</Badge>
          <HeadIcon $gap={15}><Checklist c="#666" /></HeadIcon>
          <HeadIcon $gap={14}>
            <Svg w={19} vb="0 0 19 19"><path d="M1.500 1.500h6v6h-6zM1.500 11.500h6v6h-6zM11.500 11.500h6v6h-6z" stroke="#666" strokeWidth="1.800" /><path d="M14.500 0v9M10 4.500h9" stroke="#666" strokeWidth="2" /></Svg>
          </HeadIcon>
          <HeadIcon $gap={9}>
            <Svg w={18} vb="0 0 18 18"><path d="M8 0a8 7.800 0 0 1 8 8c0 1 1.300 2 1 3l-1.500.8v2.700c0 .8-.5 1-1.500 1h-2v2.500h-7.500v-4c-2.500-1.500-3.500-3.500-3.500-6.200a7.500 7.500 0 0 1 8-7.800z" fill="#5f5f5f" stroke="none" /><circle cx="6" cy="8.500" r="2.100" stroke="#fff" strokeWidth="1.500" /><circle cx="10.800" cy="5.300" r="1.400" stroke="#fff" strokeWidth="1.300" /></Svg>
          </HeadIcon>
          <ShareButton>Share</ShareButton>
          <HeadIcon $gap={8}>
            <Svg w={18} vb="0 0 18 18"><circle cx="9" cy="9" r="9" fill="#5f5f5f" stroke="none" /><path d="M6 7c0-4 6.200-3.800 6.200-.4c0 2.200-3 2-3 4.400" stroke="#fff" strokeWidth="2.200" /><circle cx="9.200" cy="13.600" r="1.300" fill="#fff" stroke="none" /></Svg>
          </HeadIcon>
          <HeadIcon $gap={12}><Caret /></HeadIcon>
          <HeadIcon $gap={5}>
            <Svg w={24} vb="0 0 24 24"><path d="M0 12a12 12 0 0 1 24 0c0 3.500-1 5.500-2 7.500h-20c-1-2-2-4-2-7.500z" fill="#1b55b1" stroke="none" /><path d="M1 24c.5-5 4-6.500 7.500-7.500c-4.500-4-3.500-12 3.500-12s8 8 3.500 12c3.500 1 7 2.500 7.500 7.500z" fill="#fafafa" stroke="none" /></Svg>
          </HeadIcon>
          <UserName>Mild Glinrun</UserName>
          <Caret />
        </HeaderRight>
      </Header>
      <Frame>
        <Rail>
          <RailItem><Svg w={20}><circle cx="4" cy="4" r="2.600" strokeWidth="1.600" /><path d="M4 7v11M4 15.500c5 0 7-1 7-6" strokeWidth="1.700" /><circle cx="11" cy="9" r="1.600" fill={D} /><circle cx="4" cy="17" r="2" fill={D} stroke="none" /><path d="M10 3h10M14 9.500h6M10 17.500h10" strokeWidth="2" /></Svg></RailItem>
          <RailItem><Svg w={18}><path d="M4 1v3M4 14v2M4 17.500v2" strokeWidth="2" /><circle cx="4" cy="9" r="3.200" fill={D} stroke="none" /><path d="M13.500 10v9M9 14.500h9" stroke="#1b55b1" strokeWidth="2.200" /></Svg></RailItem>
          <RailItem><Svg w={20}><path d="M10 1.500c6 0 9.500 3 9.500 6.500s-3.500 6.500-9 6.500c-2 0-3 1.500-8 4c1.500-2 2-3.500 1.500-5c-2-1-3.500-3-3.500-5.500c0-3.500 3.500-6.500 9.500-6.500z" fill={D} stroke="none" /></Svg></RailItem>
          <RailItem><Svg w={20}><path d="M5.500 6.500a7 7 0 1 1 .500 9" strokeWidth="1.800" /><path d="M11 3.500v-2.500M8 1h6M16.500 5l1.500-1.500M11 11.500l3-3.500" strokeWidth="1.700" /><path d="M3 8h5M1.500 11h5M.500 14h5" strokeWidth="1.200" /></Svg></RailItem>
          <RailSplit />
          <RailItem><Checklist /></RailItem>
        </Rail>
        <Work>
          <ToolBar>
            <Tool $w={35}><Svg w={18}>{glyphs.undo}</Svg></Tool>
            <Tool><Svg w={18}>{glyphs.redo}</Svg></Tool>
            <Separator />
            <SketchButton><Pencil />Sketch</SketchButton>
            {toolGroups.map((g, i) => (
              <React.Fragment key={i}>
                <Separator />
                {g.map((n, j) =>
                  n === 'v' ? <Tool key={j} $w={18}><Chevron /></Tool>
                    : <Tool key={j}><Svg>{n === 'varx' ? <VarX /> : glyphs[n]}</Svg></Tool>
                )}
              </React.Fragment>
            ))}
            <SearchTools>
              <SearchLabel>Search tools...</SearchLabel>
              <Key $w={33}>alt/⌥</Key>
              <Key $w={17}>c</Key>
            </SearchTools>
          </ToolBar>
          <Body>
            <Panel>
              <FilterRow>
                <Svg w={16} vb="0 0 16 16"><path d="M.800 1h14.400l-5.500 7v7l-3.400-3v-4z" /></Svg>
                <FilterInput placeholder="Filter by name or type" />
              </FilterRow>
              <FeatureHead>
                <HeadLabel>Features (15)</HeadLabel>
                <FolderSlot><Svg w={19} h={15} vb="0 0 19 15"><path d="M1 5v-4h4.500l1.500 2h11v11h-8" strokeWidth="1.200" /><path d="M5.500 6v8M1.500 10h8" stroke="#1b55b1" strokeWidth="2" /></Svg></FolderSlot>
                <Svg w={17} h={18} vb="0 0 17 18"><circle cx="8.500" cy="10.500" r="6.600" strokeWidth="1.700" /><path d="M8.500 3.500v-2.500M5.500 1h6M14 4.500l1.500 1.500M8.500 10.500l2.500 3" strokeWidth="1.700" /></Svg>
              </FeatureHead>
              <Group><Chevron w={12} />Default geometry</Group>
              <Nested>
                <Row $nested><Svg w={16} vb="0 0 16 16" sw={1}><circle cx="7" cy="7.500" r="3" /><circle cx="7" cy="7.500" r="1.200" fill={D} stroke="none" /></Svg>Origin</Row>
                {['Top', 'Front', 'Right'].map((t) => <Row key={t} $nested $dim><PlaneIcon />{t}</Row>)}
              </Nested>
              {[1, 2, 3, 4].map((n) => <Row key={n} $dim><PlaneIcon />Plane {n}</Row>)}
              {[1, 2, 3, 4, 5].map((n) => <Row key={n} $dim><Pencil w={16} />Sketch {n}</Row>)}
              <Row><Svg w={16}>{glyphs.loft}</Svg>Loft 1</Row>
              <Row><Svg w={16}>{glyphs.shell}</Svg>Shell 1</Row>
              <Rollback />
              <PartsBlock>
                <Group><Chevron w={12} />Parts (1)</Group>
                <Row $nested><Svg w={16}><path d="M9 2.500l4.500-1.500l4.500 4v13.500h-12l-5-4.500v-5h6.500v-1z" strokeWidth="1.300" /><path d="M9 2.500l3.500 3.500v8h-6.500v4.500M12.500 6l1-5M6 14l-5-4.500M12.500 14l-5-4" strokeWidth="1" /></Svg>Part 1</Row>
              </PartsBlock>
            </Panel>
            <Canvas>
              <VaseSlot><Vase /></VaseSlot>
              <ListToggle><Svg w={18}><path d="M1 3l2.500 2.500l2.500-2.500" strokeWidth="1.700" /><path d="M3.500 7v12" stroke="#888" strokeWidth="2" /><path d="M8 3.500h11M6 8.500h13M6 13.500h13M6 18.500h13" strokeWidth="1.500" /></Svg></ListToggle>
              <CubeSlot><ViewCube /></CubeSlot>
              <SideTabs>
                <SideTab><Svg w={20}><path d="M9 1l5-.5l1 4l-7 8z" fill="#666" stroke="none" /><path d="M2 9l6-5l4 4l-6 6z" fill="#888" stroke="none" /><path d="M12 12l4-6l4 3v5z" fill="#aaa" stroke="none" /><rect x=".8" y="13" width="18" height="5" fill="#fff" stroke="#888" /><rect x="7" y="13" width="6" height="5" fill={L} stroke="none" /><circle cx="4" cy="15.500" r="1" stroke="#777" /></Svg></SideTab>
                <SideTab><Svg w={20}><path d="M12 5l7 3.300v7.200l-7 3.500l-7-3.500v-7.200zM5 8.300l7 3.200l7-3.200M12 11.500v7.500" /><TableGrid c="#1b55b1" /></Svg></SideTab>
                <SideTab><Svg w={20}><path d="M11 7l4.500 2v5l-4.500 2l-4.500-2v-5zM6.500 9l4.500 2l4.500-2M11 11v5" strokeWidth="1" /><path d="M4 7.500c-2 0-1 4-2.500 5c1.500 1 .500 6 2.500 6M16.500 4c2 0 1 5 2.500 7c-1.500 1 -.5 7-2.500 7" strokeWidth="1.300" /><TableGrid c="#333" /></Svg></SideTab>
                <SideTab><Svg w={20}><VarX /><TableGrid c="#333" /></Svg></SideTab>
              </SideTabs>
              <BottomTools>
                <Svg w={18}><path d="M1 11.500h9c5 0 7-2 7-5v11h-16z" fill="#fff" /><ellipse cx="11.500" cy="7.500" rx="5.500" ry="3" fill="#fff" strokeWidth="1.400" /><ellipse cx="11.500" cy="7.500" rx="2.500" ry="1.200" strokeWidth="1" /><path d="M4 17.500v-3M7 17.500v-3M10 17.500v-3M13 17.500v-3" strokeWidth="1" /></Svg>
                <Svg w={20}><path d="M1 17v-3a9 8.500 0 0 1 18 0v3z" strokeWidth="1.500" fill="#fff" /><path d="M5.500 14a4.500 4 0 0 1 9 0z" strokeWidth="1.200" /><path d="M3.500 13a6.500 6 0 0 1 13 0" strokeWidth="1" strokeDasharray="1 1" /></Svg>
                <Svg w={18}><path d="M2 3.500h16M10 2v13M4.500 4l-3 7.500h6zM15.500 4l-3 7.500h6z" strokeWidth="1.200" /><path d="M2 16.500h16" strokeWidth="2.600" /></Svg>
              </BottomTools>
            </Canvas>
          </Body>
        </Work>
      </Frame>
    </Page>
  );
}
